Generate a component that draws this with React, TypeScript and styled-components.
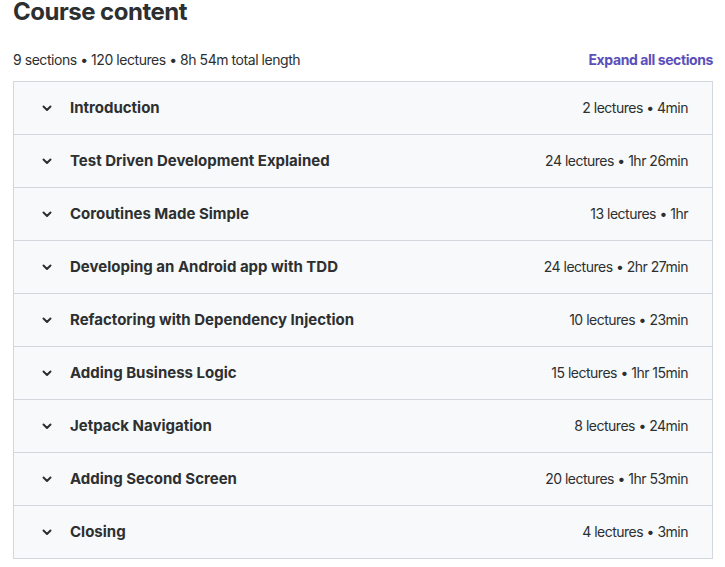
import React from "react";
import styled, { createGlobalStyle } from "styled-components";

const Global = createGlobalStyle`
  html, body { margin: 0; padding: 0; background: #ffffff; }
  body { font-family: Inter, "Noto Sans", Roboto, sans-serif; color: #2d2f31; -webkit-font-smoothing: antialiased; }
`;

const Page = styled.div`
  width: 700px;
  padding: 0 12px 0 13px;
`;

const Title = styled.h2`
  margin: 0;
  font-size: 24px;
  line-height: 24px;
  font-weight: 700;
  color: #2d2f31;
  letter-spacing: -0.5px;
`;

const Meta = styled.div`
  display: flex;
  justify-content: space-between;
  align-items: center;
  margin-top: 24px;
  height: 22px;
  margin-bottom: 11px;
`;

const Stats = styled.span`
  font-size: 14px;
  letter-spacing: -0.45px;
  color: #2d2f31;
`;

const ExpandButton = styled.button`
  border: none;
  background: none;
  padding: 0;
  font-family: inherit;
  font-size: 14px;
  font-weight: 700;
  letter-spacing: -0.4px;
  color: #5b4fb9;
  cursor: pointer;
`;

const Table = styled.div`
  border: 1px solid #d1d7dc;
  border-bottom: none;
`;

const Row = styled.div`
  display: flex;
  align-items: center;
  height: 52px;
  padding: 0 24px 0 25px;
  background: #f7f9fa;
  border-bottom: 1px solid #d1d7dc;
`;

const Chevron = styled.svg`
  width: 16px;
  height: 16px;
  flex: none;
  margin-right: 15px;
  margin-top: -1px;
`;

const SectionTitle = styled.span`
  flex: 1;
  font-size: 15px;
  font-weight: 700;
  color: #2d2f31;
  margin-top: -1px;
`;

const SectionInfo = styled.span`
  font-size: 14px;
  letter-spacing: -0.5px;
  color: #2d2f31;
  margin-top: -1px;
`;

const sections: [string, string][] = [
  ["Introduction", "2 lectures • 4min"],
  ["Test Driven Development Explained", "24 lectures • 1hr 26min"],
  ["Coroutines Made Simple", "13 lectures • 1hr"],
  ["Developing an Android app with TDD", "24 lectures • 2hr 27min"],
  ["Refactoring with Dependency Injection", "10 lectures • 23min"],
  ["Adding Business Logic", "15 lectures • 1hr 15min"],
  ["Jetpack Navigation", "8 lectures • 24min"],
  ["Adding Second Screen", "20 lectures • 1hr 53min"],
  ["Closing", "4 lectures • 3min"],
];

export default function App() {
  return (
    <Page>
      <Global />
      <Title>Course content</Title>
      <Meta>
        <Stats>9 sections • 120 lectures • 8h 54m total length</Stats>
        <ExpandButton>Expand all sections</ExpandButton>
      </Meta>
      <Table>
        {sections.map(([t, info]) => (
          <Row key={t}>
            <Chevron viewBox="0 0 16 16" fill="none">
              <path d="M4.5 6.5 L8 10 L11.5 6.5" stroke="#2d2f31" strokeWidth="2" strokeLinecap="round" strokeLinejoin="round" />
            </Chevron>
            <SectionTitle>{t}</SectionTitle>
            <SectionInfo>{info}</SectionInfo>
          </Row>
        ))}
      </Table>
    </Page>
  );
}
